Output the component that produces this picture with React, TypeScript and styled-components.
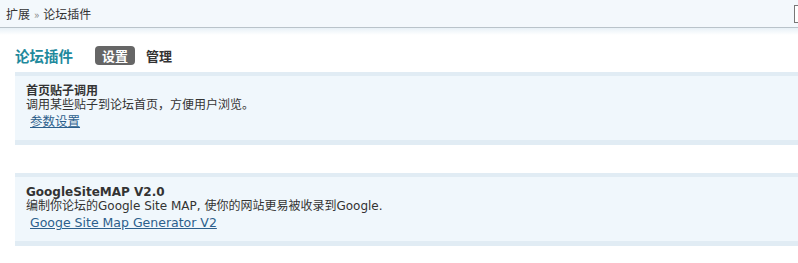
import styled, { createGlobalStyle } from 'styled-components';

const GlobalStyle = createGlobalStyle`
  body {
    margin: 0;
    background: #fff;
    font-family: "DejaVu Sans", "Noto Sans CJK SC", sans-serif;
    font-size: 12px;
    color: #333;
  }
`;

const Breadcrumb = styled.div`
  display: flex;
  align-items: center;
  height: 27px;
  padding-left: 6px;
  background: #f3f8fc;
  border-bottom: 1px solid #b9c3ca;
  overflow: hidden;
`;

const Crumbs = styled.span`
  font-family: "Noto Sans CJK SC", sans-serif;
  font-size: 12px;
  color: #333;
`;

const Sep = styled.span`
  color: #888;
  font-size: 11px;
  margin: 0 4px;
`;

const EdgeBox = styled.span`
  margin-left: auto;
  width: 3px;
  height: 16px;
  border: 1px solid #777;
  border-right: none;
  background: #fff;
`;

const Shade = styled.div`
  height: 7px;
  background: linear-gradient(#e8f1f7, #fff);
`;

const TitleRow = styled.div`
  display: flex;
  align-items: center;
  gap: 11px;
  padding: 10px 15px 6px;
`;

const PageTitle = styled.h3`
  margin: 0 11px 0 0;
  font-family: "Noto Sans CJK SC", sans-serif;
  font-size: 14.5px;
  font-weight: bold;
  color: #1f8a9d;
`;

const Tab = styled.span<{ $active?: boolean }>`
  font-family: "Noto Sans CJK SC", sans-serif;
  font-size: 13px;
  font-weight: bold;
  line-height: 19px;
  padding: 0 ${p => (p.$active ? '7px' : '0')};
  border-radius: 4px;
  background: ${p => (p.$active ? '#666' : 'transparent')};
  color: ${p => (p.$active ? '#fff' : '#333')};
`;

const List = styled.div`
  display: flex;
  flex-direction: column;
  gap: 28px;
`;

const Plugin = styled.div`
  margin-left: 15px;
  padding: 8px 11px 10px;
  background: #f0f7fc;
  border-top: 4px solid #e1ecf4;
  border-bottom: 5px solid #e1ecf4;
  line-height: 14px;
`;

const PluginName = styled.div`
  font-weight: bold;
  color: #333;
`;

const PluginDesc = styled.div`
  color: #333;
`;

const PluginLink = styled.a`
  display: inline-block;
  margin: 2px 0 0 4px;
  font-size: 12.5px;
  line-height: 16px;
  color: #2c5f8c;
  text-decoration: underline;
`;

const plugins = [
  {
    name: '首页贴子调用',
    desc: '调用某些贴子到论坛首页，方便用户浏览。',
    link: '参数设置',
  },
  {
    name: 'GoogleSiteMAP V2.0',
    desc: '编制你论坛的Google Site MAP, 使你的网站更易被收录到Google.',
    link: 'Googe Site Map Generator V2',
  },
];

const App = () => (
  <>
    <GlobalStyle />
    <Breadcrumb>
      <Crumbs>
        扩展<Sep>»</Sep>论坛插件
      </Crumbs>
      <EdgeBox />
    </Breadcrumb>
    <Shade />
    <TitleRow>
      <PageTitle>论坛插件</PageTitle>
      <Tab $active>设置</Tab>
      <Tab>管理</Tab>
    </TitleRow>
    <List>
      {plugins.map(p => (
        <Plugin key={p.name}>
          <PluginName>{p.name}</PluginName>
          <PluginDesc>{p.desc}</PluginDesc>
          <PluginLink href="#">{p.link}</PluginLink>
        </Plugin>
      ))}
    </List>
  </>
);

export default App;
